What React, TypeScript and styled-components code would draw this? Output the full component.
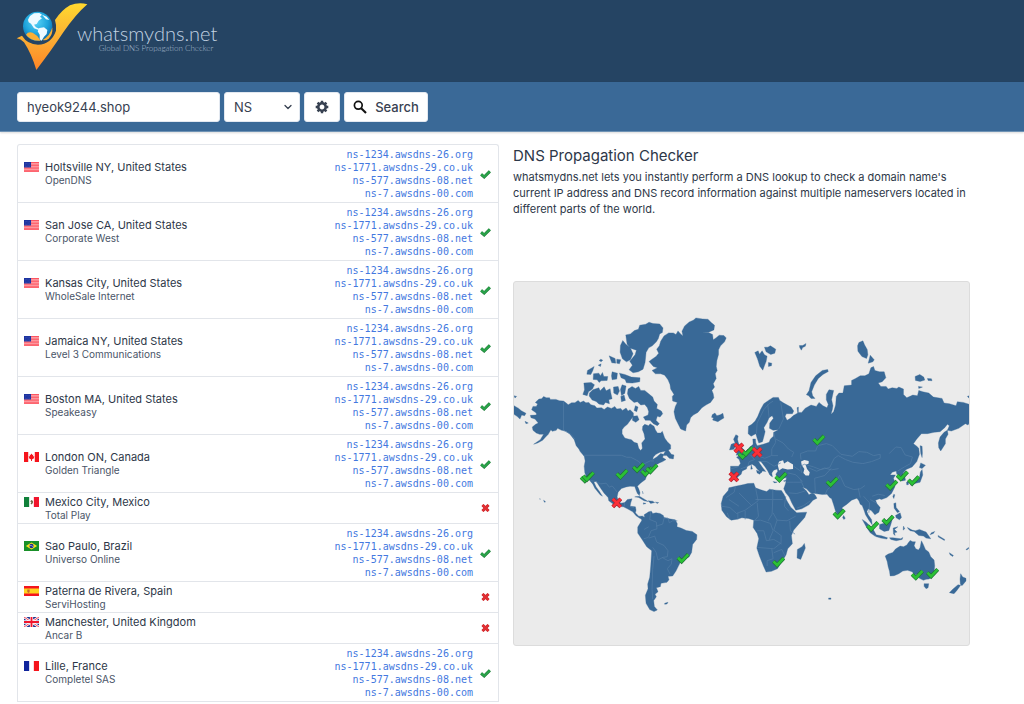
import React from "react";
import styled, { createGlobalStyle } from "styled-components";

const GlobalStyle = createGlobalStyle`
  *, *::before, *::after { box-sizing: border-box; }
  body {
    margin: 0;
    background: #ffffff;
    color: #2d3748;
    font-family: Inter, "Liberation Sans", sans-serif;
  }
`;

const Header = styled.header`
  display: flex;
  align-items: flex-start;
  padding: 2px 16px 10px;
  background: #254463;
`;

const Brand = styled.a`
  display: flex;
  color: #c3d3e2;
  text-decoration: none;
`;

const BrandMark = styled.svg`
  display: block;
  width: 72px;
  height: 70px;
`;

const BrandText = styled.span`
  display: flex;
  flex-direction: column;
  align-items: flex-end;
  margin-left: -11px;
  padding-top: 20px;
  font-family: Lato, "Open Sans", sans-serif;
  font-weight: 300;
`;

const BrandName = styled.span`
  font-size: 20px;
  line-height: 22px;
`;

const BrandTagline = styled.span`
  padding-right: 4px;
  font-size: 8px;
  line-height: 9px;
  color: #a9bccf;
`;

const Toolbar = styled.form`
  display: flex;
  gap: 4px;
  padding: 10px 17px 9px;
  background: #3a6997;
  border-bottom: 1px solid #6f93b5;
  box-shadow: 0 1px 2px rgba(0, 0, 0, 0.15);
`;

const controlStyle = `
  height: 30px;
  border: 1px solid #e2e8f0;
  border-radius: 3px;
  background: #ffffff;
  color: #374151;
  font-family: inherit;
  font-size: 13px;
  line-height: 20px;
`;

const DomainInput = styled.input`
  ${controlStyle}
  width: 203px;
  padding: 0 9px;
`;

const SelectWrap = styled.span`
  position: relative;
  display: block;
  width: 76px;
`;

const TypeSelect = styled.select`
  ${controlStyle}
  width: 100%;
  padding: 0 9px;
  appearance: none;
`;

const Chevron = styled.svg`
  position: absolute;
  right: 7px;
  top: 10px;
  width: 10px;
  height: 10px;
  pointer-events: none;
`;

const ToolButton = styled.button<{ $wide?: boolean }>`
  ${controlStyle}
  display: flex;
  align-items: center;
  justify-content: center;
  gap: 8px;
  width: ${(p) => (p.$wide ? "84px" : "36px")};
  padding: 0;
  font-weight: 500;
`;

const Main = styled.main`
  display: grid;
  grid-template-columns: minmax(0, 482fr) minmax(0, 457fr);
  align-items: start;
  gap: 14px;
  padding: 12px 54px 0 17px;
`;

const Results = styled.table`
  width: 100%;
  border: 1px solid #e2e5ea;
  border-bottom: 0;
  border-radius: 3px 3px 0 0;
  border-collapse: separate;
  border-spacing: 0;
`;

const Cell = styled.td<{ $align?: "right" }>`
  height: 31px;
  padding: 1px 6px;
  border-bottom: 1px solid #e2e5ea;
  text-align: ${(p) => p.$align ?? "left"};
  vertical-align: middle;
`;

const RecordCell = styled(Cell)`
  padding: 3px 0 2px;
`;

const StatusCell = styled(Cell)`
  width: 25px;
`;

const Place = styled.div`
  display: flex;
  gap: 6px;
`;

const FlagArt = styled.svg`
  display: block;
  flex: none;
  width: 15px;
  height: 10px;
  margin-top: 2px;
`;

const PlaceName = styled.div`
  font-size: 11px;
  line-height: 14px;
`;

const Provider = styled.div`
  font-size: 10px;
  line-height: 13px;
  color: #4a5568;
`;

const RecordLink = styled.a`
  display: block;
  color: #4378e0;
  font-family: "DejaVu Sans Mono", "Liberation Mono", monospace;
  font-size: 10px;
  line-height: 13px;
  text-decoration: none;
`;

const StatusIcon = styled.svg`
  display: block;
  width: 13px;
  height: 12px;
`;

const About = styled.section`
  display: flex;
  flex-direction: column;
`;

const Title = styled.h1`
  margin: 0;
  font-size: 15px;
  font-weight: 400;
  line-height: 24px;
`;

const Intro = styled.p`
  margin: 1px 0 64px;
  font-size: 11px;
  line-height: 16px;
`;

const MapFrame = styled.div`
  border: 1px solid #dcdcdc;
  border-radius: 3px;
  background: #ebebeb;
  overflow: hidden;
`;

const MapArt = styled.svg`
  display: block;
  width: 100%;
  height: auto;
`;

type Country = "us" | "ca" | "mx" | "br" | "es" | "gb" | "fr";

function Flag({ country }: { country: Country }) {
  return (
    <FlagArt viewBox="0 0 32 20" preserveAspectRatio="none" aria-hidden="true">
      {country === "us" && (
        <>
          <rect width="32" height="20" fill="#ffc9cc" />
          <path d="M0 1h32M0 4.200h32M0 7.300h32M0 10.400h32M0 13.500h32M0 16.600h32M0 19.300h32" stroke="#fb4450" strokeWidth="1.800" />
          <rect width="15" height="11" fill="#1c33a0" />
          <path d="M2 3h11M3 6h10M2 9h11" stroke="#6f82d0" strokeWidth="1" strokeDasharray="1 2" />
        </>
      )}
      {country === "ca" && (
        <>
          <rect width="32" height="20" fill="#fff" />
          <path d="M0 0h9v20H0zM23 0h9v20h-9zM16 3l2 3 2-1-1 4 3-1-1 3 1 1-5 3v3h-2v-3l-5-3 1-1-1-3 3 1-1-4 2 1z" fill="#f5141c" />
        </>
      )}
      {country === "mx" && (
        <>
          <rect width="32" height="20" fill="#fff" />
          <path d="M0 0h11v20H0z" fill="#10803a" />
          <path d="M21 0h11v20H21z" fill="#f0142c" />
          <path d="M13 9l3-3 3 2v4l-3 3-2-2 2-3z" fill="#6b6241" />
        </>
      )}
      {country === "br" && (
        <>
          <rect width="32" height="20" fill="#199029" />
          <path d="M4 10 16 3l12 7-12 7z" fill="#fbe21c" />
          <circle cx="16" cy="10" r="4.500" fill="#20308c" />
          <path d="M12 9q5-1 8 3" stroke="#fff" fill="none" />
        </>
      )}
      {country === "es" && (
        <>
          <rect width="32" height="20" fill="#f4141e" />
          <rect y="5" width="32" height="10" fill="#ffd21e" />
          <path d="M7 7h5v5l-2 2-3-2z" fill="#c66a30" />
        </>
      )}
      {country === "gb" && (
        <>
          <rect width="32" height="20" fill="#1a2f8c" />
          <path d="M0 0l32 20M32 0L0 20" stroke="#fff" strokeWidth="5" />
          <path d="M0 0l32 20M32 0L0 20" stroke="#f0142c" strokeWidth="1.600" />
          <path d="M16 0v20M0 10h32" stroke="#fff" strokeWidth="7" />
          <path d="M16 0v20M0 10h32" stroke="#f0142c" strokeWidth="4" />
        </>
      )}
      {country === "fr" && (
        <>
          <rect width="32" height="20" fill="#fff" />
          <path d="M0 0h11v20H0z" fill="#10249c" />
          <path d="M21 0h11v20H21z" fill="#f5141c" />
        </>
      )}
    </FlagArt>
  );
}

const CHECK = "M-15 0 -4 11 16-10";
const CROSS = "M-12-12 12 12M12-12-12 12";

function Status({ ok }: { ok: boolean }) {
  const mark = ok ? "M-13 1 -4 9 13-8" : "M-9-9 9 9M9-9-9 9";
  return (
    <StatusIcon viewBox="-18 -18 36 36" role="img" aria-label={ok ? "Resolved" : "Not found"}>
      <path d={mark} fill="none" stroke={ok ? "#1b7a35" : "#c02427"} strokeWidth="9" />
      <path d={mark} fill="none" stroke={ok ? "#2aa44a" : "#e22f33"} strokeWidth="6" />
    </StatusIcon>
  );
}

const RECORDS = [
  "ns-1234.awsdns-26.org",
  "ns-1771.awsdns-29.co.uk",
  "ns-577.awsdns-08.net",
  "ns-7.awsdns-00.com",
];

const SERVERS: { country: Country; place: string; provider: string; ok: boolean }[] = [
  { country: "us", place: "Holtsville NY, United States", provider: "OpenDNS", ok: true },
  { country: "us", place: "San Jose CA, United States", provider: "Corporate West", ok: true },
  { country: "us", place: "Kansas City, United States", provider: "WholeSale Internet", ok: true },
  { country: "us", place: "Jamaica NY, United States", provider: "Level 3 Communications", ok: true },
  { country: "us", place: "Boston MA, United States", provider: "Speakeasy", ok: true },
  { country: "ca", place: "London ON, Canada", provider: "Golden Triangle", ok: true },
  { country: "mx", place: "Mexico City, Mexico", provider: "Total Play", ok: false },
  { country: "br", place: "Sao Paulo, Brazil", provider: "Universo Online", ok: true },
  { country: "es", place: "Paterna de Rivera, Spain", provider: "ServiHosting", ok: false },
  { country: "gb", place: "Manchester, United Kingdom", provider: "Ancar B", ok: false },
  { country: "fr", place: "Lille, France", provider: "Completel SAS", ok: true },
];

const PINS: [number, number, boolean][] = [
  [226, 533, true], [232, 529, true], [333, 522, true], [383, 502, true],
  [408, 514, true], [423, 506, true], [517, 775, true], [318, 610, false],
  [700, 462, true], [710, 453, true], [685, 445, false], [740, 458, false],
  [670, 532, false], [925, 419, true], [811, 531, true], [965, 546, true],
  [986, 641, true], [804, 786, true], [1087, 679, true], [1133, 660, true],
  [1144, 555, true], [1176, 527, true], [1210, 541, true], [1221, 825, true],
  [1267, 820, true],
];

const NORTH_AMERICA =
  "M62 330 66 320 76 320 80 313 73 308 84 298 92 297 98 290 106 294 116 294 118 299 135 299 146 303 158 304 166 310 172 315 182 309 192 309 202 302 208 308 218 304 225 309 234 308 240 315 252 318 258 325 272 324 280 329 290 322 302 326 312 320 318 328 330 326 335 332 346 325 352 334 358 330 368 340 368 350 360 360 350 374 340 382 334 390 334 402 342 415 352 418 362 420 370 428 380 431 384 446 390 453 395 446 393 430 403 418 400 402 395 390 396 380 402 374 414 378 418 372 430 380 434 390 440 400 450 400 455 395 462 415 470 426 480 436 480 448 466 454 448 458 436 464 428 472 426 480 438 472 450 462 458 464 456 474 466 480 456 486 446 490 436 496 430 506 416 516 408 528 404 540 390 550 380 560 384 568 388 580 386 588 380 582 376 572 372 561 358 560 346 562 332 567 322 578 319 592 322 602 330 611 342 609 350 600 364 598 360 610 358 620 374 622 376 632 374 640 384 650 396 650 403 656 400 661 388 657 376 649 366 637 350 628 338 622 322 620 306 613 294 604 292 594 280 581 268 564 256 545 249 547 256 562 266 576 275 590 268 586 252 566 246 554 238 544 228 534 222 520 220 500 223 484 220 470 208 456 204 448 196 438 190 420 182 410 176 402 164 394 152 392 140 386 136 392 124 395 120 390 112 404 104 412 95 422 80 430 68 434 88 420 98 404 86 404 76 400 66 392 64 382 74 374 82 370 72 358 60 354 58 347 76 346 76 340Z";
const SOUTH_AMERICA =
  "M402 653l-2-7 14-9 8-2 4 7 10-2 12 2 10 6 2 6 16 4 18 3 6 12-1 9 12 4 16 7 18 3 14 10-1 14-12 15-3 24-8 14-14 6-11 8-7 14-7 14-10 15-14 1 3 10-6 8-18 3-2 10-12 3 5 12-9 8 4 7-8 12 2 18 9 10-10 5-13-6-11-19-2-24 8-20-1-14 6-20 3-34 3-46-15-12-14-22-13-19v-18l12-20-2-12Z";
const GREENLAND =
  "M415 185 424 178 436 170 444 160 438 148 446 138 450 124 460 108 474 99 488 99 496 104 502 93 510 102 517 108 514 94 522 78 536 66 548 61 556 54 576 57 592 58 602 68 612 76 610 90 596 96 574 99 594 98 606 104 608 120 616 114 626 106 640 107 647 114 642 126 630 138 624 150 624 164 619 182 617 200 620 212 614 222 617 236 608 252 612 262 604 272 608 282 610 294 600 308 586 316 574 324 562 338 548 346 540 354 536 368 528 376 525 394 510 388 502 372 494 356 490 336 494 320 500 308 486 304 485 290 490 284 480 268 478 254 472 240 462 226 450 222 434 222 424 212 440 204 428 200Z";
const EURASIA =
  "M660 500 660 528 666 530 675 540 684 530 692 524 695 514 708 508 710 500 725 494 734 500 740 508 752 520 756 514 766 516 758 506 748 492 744 484 750 484 764 502 772 514 778 526 786 532 784 520 790 512 800 508 802 515 796 524 800 534 812 538 828 534 826 550 820 568 826 580 836 592 844 610 856 632 874 628 896 616 908 602 920 596 914 586 906 580 896 586 888 574 876 562 888 568 900 580 914 582 936 585 950 584 958 594 964 598 970 616 976 636 986 650 994 640 996 624 1010 614 1024 602 1040 596 1046 604 1050 614 1056 618 1062 634 1066 646 1076 662 1086 676 1084 660 1074 646 1070 636 1074 628 1084 634 1094 646 1106 638 1110 624 1100 612 1096 602 1108 598 1114 600 1130 594 1144 582 1154 562 1154 548 1150 536 1156 526 1140 526 1146 518 1158 514 1160 524 1170 528 1176 544 1186 542 1184 530 1178 522 1188 510 1206 502 1220 486 1228 464 1226 446 1220 440 1210 432 1220 418 1234 402 1252 402 1272 398 1290 396 1304 384 1312 374 1318 378 1312 392 1314 404 1306 418 1306 432 1292 454 1286 444 1285 430 1290 412 1302 398 1312 392 1324 394 1346 386 1366 372 1374 376 1378 370 1378 314 1360 308 1342 306 1338 318 1318 312 1302 310 1296 296 1270 292 1256 280 1238 276 1226 272 1222 288 1208 286 1190 294 1180 284 1180 268 1166 262 1160 266 1146 264 1134 268 1128 260 1112 260 1104 250 1116 246 1127 234 1122 216 1108 216 1094 212 1090 200 1082 204 1076 222 1064 228 1050 228 1036 236 1024 242 1024 256 1002 258 998 280 986 280 978 290 976 316 970 336 962 344 966 330 968 318 964 300 970 272 956 270 948 284 948 300 954 314 950 324 938 318 926 308 918 320 902 316 884 326 874 338 864 338 864 322 860 324 862 340 848 348 840 356 830 362 824 350 828 342 846 342 850 334 842 322 820 310 808 302 804 293 788 293 774 302 760 312 750 330 742 350 734 364 724 374 714 380 713 402 722 410 736 402 740 416 745 430 756 426 760 412 764 396 760 384 770 368 776 354 785 348 789 356 778 370 777 386 788 392 804 390 790 398 789 410 780 418 776 428 758 434 740 438 736 430 735 418 727 418 728 434 716 444 706 458 690 466 678 473 686 480 690 492 684 500Z";
const AFRICA =
  "M655 565l20-5 25-5 12-3 18-1 5 14 16 6 18 5 8-7 20 3 16 1 8 12 8 18 12 20 18 17 30-2-6 16-18 20-15 18-7 16 3 25-14 15-5 18-12 20-14 22-18 8-16 2-8-18-12-30-8-24 6-28-5-16-12-18 2-22-16-5-20-2-14 4-18 3-14-10-14-20-2-20 6-22 15-17Z";
const AUSTRALIA =
  "M1125 770l9-6 14-5 8-10 14-9 10 2 10-5 4-6 6-8 8 4 8 0-4 12 5 9 8 4 5-8 4-20 6 12 6 14 10 8 6 14 10 10 2 17-2 18-10 16-4 6-10 1-8 3-12-6-6-12-8 2-8-10-14-4-14 2-12 8-14 6-12 1-2-14-4-14-3-16Z";

const ISLANDS = [
  "M345 105l14-3 12-10 12-4 4-12 18-3 10-6 12 4 20 1 10 12-2 14-8 4-4 14-6 10-12 12-11 6-8 14-1 12-2 18-6 20-14 8-16 3-12-9 10-14-8-12 16-19 4-14-18-6-10-12Z",
  "M336 122l10 12 12 8 9 20-8 18-12 6-12-9-7-20 1-20Z",
  "M326 220l16 4 20 8 26 2-1 12-22 4-18-1-4-10-12-5Z",
  "M304 216l16 4-2 18-14 2-2-12ZM295 168l18 8 2 14-12-1ZM318 178l12 2-4 12-8-2Z",
  "M230 212l20-12-4 12-6 12-12-1ZM270 178l6 3-5 5-6-4ZM262 196l9-4-2 8Z",
  "M248 222l16-2 5 8 6-10 4 12 12 0-2 12-18 1-6 5-6-8-12-1Z",
  "M219 250l22-2 10 7-6 13-12 8-4 12-13-4 5-14Z",
  "M236 280l10-10 18-6 4 9 12-12 6 12 12-6 2 12 4 18-10 3 2 12-12-4-6 8-14-3-8-8-12-4-9-12Z",
  "M308 262l14-2 4 14-6 12-11-6ZM334 255l12 4-4 22-10 6-3-18ZM330 290l10-4 4 16-12 4Z",
  "M352 268 364 260 374 266 384 260 390 272 402 272 414 282 426 292 430 304 440 314 438 326 452 334 456 342 448 352 440 350 436 362 446 372 440 378 428 372 418 362 404 362 398 352 412 346 414 336 410 324 402 314 390 316 380 306 370 308 356 296 350 282Z",
  "M366 350l14-2 5 12-10 8-10-6ZM374 318l8 4-4 14-8-4ZM470 446l-14 22 12 0 8 8 12 2 2-12-8-2-6-8Z",
  "M9 318l14 8 8 7 14 8-4 7-9-2-5 12-9-8-9-6ZM9 288l8 2-5 5ZM42 365l10 5-7 2Z",
  "M605 345l8-5 6 8 10-3 8-4 3 14-9 5-9 6-16-5 3-6-6-2Z",
  "M733 158l10-5 4 10 8-10 7 12 8 4-3 16-4 10-6 16-9-12-7-22ZM762 142l10 0 8-4 16 10-3 12-12 4-14-8ZM774 188l10 2-1 8-9 2Z",
  "M676 405l7 4-2 10 3 12 9 12 8 8-3 10-21 6 4-12-5-5 5-9-7-10-5-12ZM662 434l10-4 3 10-5 9-13 2Z",
  "M867 137l10 0 10-6-2 8-8 4-4 8-5-8ZM1042 138l4-10 12-5 5 12 8 14 2 16-4 11-14-6-12-16ZM1074 190l6-24 12 14-4 6Z",
  "M888 285l8-12 6-25 14-20 20-16 16-3 2 6-16 9-14 12-12 20-8 20 3 12 7 8-12 0-7-8Z",
  "M1215 230l14-6 12 8 3 9-14 4-14-3ZM1252 236l12 1 2 6-12-1ZM1225 260l12 2-11 4ZM1372 290l6-2v8Z",
  "M1230 438l6 2 1 20-1 14-4-12ZM1232 490l14 7-10 10-8-3ZM1236 510l2 16-8 22-16 4-13 4 10-9 16-8 4-22ZM1189 548l6-2 0 9-5 1Z",
  "M882 732l3 14-14 34-11-4 1-26 14-8Z",
  "M1000 648l5 8-4 4-4-6ZM1151 584l3 2-3 11-3-6Z",
  "M1056 660l12 8 20 20 10 18-4 4-14-10-12-18ZM1096 706l18 3 18 6-2 4-18-3-16-5ZM1138 715l10 0 24 3 6-4-2 6-18 4-16-4Z",
  "M1108 675l14-4 12-12 12 2-4 14-6 18-14 3-14-8ZM1149 686l14-4-10 8 8 8-8 2 2 8-5-4Z",
  "M1151 612l6-2 1 14 10 12-6 4-10-14ZM1156 648l14-8 4 14-6 7-10-6ZM1180 680l4 8-5 4Z",
  "M1192 684l14 8 10 2 12-4 20 8 14 20-14-2-8-6-14-2-14-12-12-2-6-6Z",
  "M1264 700l10-4-4 6-10 4ZM1284 708l20 12-1 3-18-10ZM1318 760l12 8-2 3-8-5ZM1368 750l8-6v4l-6 4Z",
  "M1242 853l14 0-2 12-6 3-6-7ZM1352 823l6 10 10 4 0 8-12 14-5-4-1-16ZM1344 856l8 2-12 16-8 9-14-3 10-10Z",
  "M372 592l14-2 20 12 6 4-12-2-16-10ZM412 604l14 1 6 4-12 3ZM398 610l8 2-8 2ZM434 608l10 1-4 3ZM395 575l2 8ZM462 912l10-3-3 5-7 1Z",
  "M85 598l4 1ZM98 602l6 5-4 1ZM955 896l7 0 0 4-7 0Z",
  "M738 512l14 6-4 6-8-4ZM722 496l4 12-5 1ZM788 546l12 2-8 2ZM819 544l9-3-4 5Z",
];

const SEAS = [
  "M802 496 806 486 818 482 821 492 832 485 840 490 848 495 848 508 832 510 816 506 806 513Z",
  "M872 486 882 481 895 484 895 492 886 496 890 508 898 518 896 528 886 528 879 520 882 508 874 496Z",
];

const BORDERS =
  "M158 305v87l22 12 12 14M218 467h114l16 6 12 0 16 8 10 6 4 8 12-3 16-8 12 0M238 543l14 2 18 8 16-2 10 12 8-4 10 12 4 6" +
  "M342 610l-2 12M360 622l10 2M420 638l-3 22 20 8 2 20-18 6-8 20-14 4M436 680l20-6 4-18 12 0 4 14 10-6 14 0M400 690l14-8M414 716l18-6 6 18 22 10 12 16-2 18-14 2-14 8-6-24-10-14M454 774l18 10 12-6-2 16-12 14 8 16M430 770l-4 40-2 60 2 30" +
  "M738 402l2-32 20-40 16-18 12-8M776 354l-4-40M805 388l14-30-8-50M660 508l22-6M690 508l22-8 4-14 16-6-12-14M735 438l4 30 24 8 20-8 20 0M790 398l6 30-12 20 0 20M796 418l22 12 16 18 16 10-6 14M745 486l24 0 22 14 20-10M833 520l24 6 20 20M850 500l20 14" +
  "M872 480l-2-18 22-8 24 0 6-16 26-6 18 6 26 26 34 6 20-14 24 2 20 10 20-4 0 12-26 10-26 6-30-4-22-8-22-12-12 8-14 28-28 6-20-8-28-8-12 6 4 20M1137 462l20-20 16 2 12 22 22 6-6 20-18 10-20 12" +
  "M895 505l24 10 24-10 20 6 22-4M915 580l-2-44 30-8 20-22M945 584l6-14 24-20 14-24M990 530l14 30 26 10 20-2 14-10M1044 566l6 28M1060 590l18 20-2 30M1080 600l18 10M1086 590l18-6 20 4" +
  "M675 560l-4 18-24 16M655 600l30 20M685 580l38 38 20-14-8-40M735 600l52 0 0-30M787 600l30 0M787 600l-2 44-12 20M740 610l4 40-12 14M632 620l26 4 20 18 26-10 22-16M650 640l8 20M682 640l0 20M704 634l0 26M730 664l20-2 30 10 8 22-12 28M788 640l12 22 30 2 26-14M826 590l-4 30 12 14M838 664l2 30 14 10M800 662l-10 30 24 18M740 694l20 0 8 30 22-4M740 744l50 4 22-18 0-20M784 748l4 30-18 6 0 16M790 760l24-10 10 20M790 720l24 14" +
  "M860 626l20-8 20-14M835 580l24 2 26-8M828 548l20 0 24 0M870 540l10 22";

function WorldMap() {
  return (
    <MapArt viewBox="9 -54 1368 1092" role="img" aria-label="Propagation results on a world map">
      <g fill="#396997" stroke="#396997" strokeWidth="1" strokeLinejoin="round">
        {[NORTH_AMERICA, SOUTH_AMERICA, GREENLAND, EURASIA, AFRICA, AUSTRALIA, ...ISLANDS].map((d) => (
          <path key={d} d={d} />
        ))}
      </g>
      <g fill="#ebebeb">
        {SEAS.map((d) => (
          <path key={d} d={d} />
        ))}
      </g>
      <path d={BORDERS} fill="none" stroke="#557fa7" strokeWidth="2" strokeLinejoin="round" />
      {PINS.map(([x, y, ok]) => (
        <g key={`${x}-${y}`} transform={`translate(${x} ${y})`} fill="none">
          <path d={ok ? CHECK : CROSS} stroke={ok ? "#20703a" : "#a32532"} strokeWidth="12" />
          <path d={ok ? CHECK : CROSS} stroke={ok ? "#2bc135" : "#fb2f37"} strokeWidth="8" />
        </g>
      ))}
    </MapArt>
  );
}

function Logo() {
  return (
    <BrandMark viewBox="48 6 216 210" aria-hidden="true">
      <defs>
        <linearGradient id="swoosh" x1="0" y1="0" x2="0" y2="1">
          <stop offset="0" stopColor="#ffd92f" />
          <stop offset="0.500" stopColor="#fbb034" />
          <stop offset="1" stopColor="#ff8526" />
        </linearGradient>
        <radialGradient id="globe" cx="0.450" cy="0.350" r="0.650">
          <stop offset="0" stopColor="#58d3f7" />
          <stop offset="0.600" stopColor="#1fa5dc" />
          <stop offset="1" stopColor="#0b6cae" />
        </radialGradient>
      </defs>
      <path d="M50 115 66 107Q82 133 114 134 154 132 168 92 170 76 165 60 185 30 210 16 236 6 262 13 228 42 190 97 155 150 109 210 94 160 72 127 62 117 50 115Z" fill="url(#swoosh)" />
      <circle cx="113" cy="79" r="44" fill="url(#globe)" />
      <path d="M90 48l12-8 16-1 8 5-6 6 6 5-10 7-6 10-8 2 6 8 10 4-2 4-14-5-9-14-7-4-2-8ZM118 84l14-2 10 8-2 12-8 8-7 12-6-4 0-14-6-10ZM126 44l14 6 8 10-10-2Z" fill="#eefaff" />
      <path d="M78 104Q84 94 98 98L112 108 122 122Q92 124 78 104Z" fill="#fbb034" />
      <path d="M128 120Q150 108 157 82 159 104 146 116 137 123 128 120Z" fill="#fbb034" />
    </BrandMark>
  );
}

export default function App() {
  return (
    <>
      <GlobalStyle />
      <Header>
        <Brand href="#">
          <Logo />
          <BrandText>
            <BrandName>whatsmydns.net</BrandName>
            <BrandTagline>Global DNS Propagation Checker</BrandTagline>
          </BrandText>
        </Brand>
      </Header>
      <Toolbar onSubmit={(e) => e.preventDefault()}>
        <DomainInput type="text" aria-label="Domain name" defaultValue="hyeok9244.shop" />
        <SelectWrap>
          <TypeSelect aria-label="Record type" defaultValue="NS">
            <option>NS</option>
          </TypeSelect>
          <Chevron viewBox="0 0 10 10" aria-hidden="true">
            <path d="M2 3.500 5 6.500 8 3.500" fill="none" stroke="#374151" strokeWidth="1.300" strokeLinecap="round" strokeLinejoin="round" />
          </Chevron>
        </SelectWrap>
        <ToolButton type="button" aria-label="Settings">
          <svg width="14" height="14" viewBox="-7 -7 14 14" aria-hidden="true">
            <circle r="3.700" fill="none" stroke="#374151" strokeWidth="2.600" />
            {[0, 45, 90, 135].map((a) => (
              <path key={a} d="M0-6.300V-4M0 4V6.300" transform={`rotate(${a})`} stroke="#374151" strokeWidth="2.400" />
            ))}
          </svg>
        </ToolButton>
        <ToolButton type="submit" $wide>
          <svg width="14" height="14" viewBox="0 0 14 14" aria-hidden="true">
            <circle cx="5.300" cy="5.300" r="3.900" fill="none" stroke="#111" strokeWidth="1.700" />
            <path d="M8.200 8.200 13 13" stroke="#111" strokeWidth="2.100" />
          </svg>
          Search
        </ToolButton>
      </Toolbar>
      <Main>
        <Results aria-label="DNS results by location">
          <tbody>
            {SERVERS.map((s) => (
              <tr key={s.place}>
                <Cell>
                  <Place>
                    <Flag country={s.country} />
                    <div>
                      <PlaceName>{s.place}</PlaceName>
                      <Provider>{s.provider}</Provider>
                    </div>
                  </Place>
                </Cell>
                <RecordCell $align="right">
                  {s.ok && RECORDS.map((r) => (
                    <RecordLink key={r} href="#">{r}</RecordLink>
                  ))}
                </RecordCell>
                <StatusCell>
                  <Status ok={s.ok} />
                </StatusCell>
              </tr>
            ))}
          </tbody>
        </Results>
        <About>
          <Title>DNS Propagation Checker</Title>
          <Intro>
            whatsmydns.net lets you instantly perform a DNS lookup to check a domain name's current IP address and DNS
            record information against multiple nameservers located in different parts of the world.
          </Intro>
          <MapFrame>
            <WorldMap />
          </MapFrame>
        </About>
      </Main>
    </>
  );
}
